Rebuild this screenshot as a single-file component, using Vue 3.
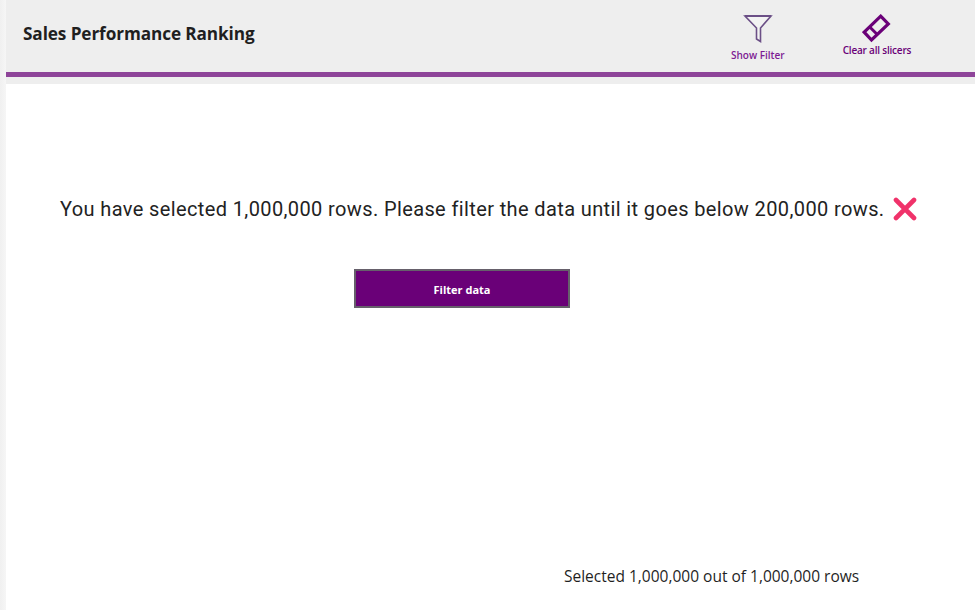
<template>
  <div class="page">
    <div class="main">
      <header class="header">
        <div class="top">
          <h1 class="title">Sales Performance Ranking</h1>
          <div class="actions">
            <div class="action filter">
              <svg class="filter-icon" width="30" height="30" viewBox="0 0 30 30">
                <path d="M2 2H28L17.5 14V27.5L13.5 25V14Z" fill="#fff" fill-opacity="0.25" stroke="#6b4f86" stroke-width="1.6" />
                <path d="M2 2H28" stroke="#6b4f86" stroke-width="2" />
              </svg>
              <span>Show Filter</span>
            </div>
            <div class="action clear">
              <svg class="clear-icon" width="29" height="29" viewBox="0 0 29 29">
                <path d="M18.7 2.2L26.3 10L9.5 26L2.2 18.2Z" fill="none" stroke="#6a0078" stroke-width="3.2" />
                <path d="M7.5 12.8L15.5 20.8" stroke="#6a0078" stroke-width="3" />
              </svg>
              <span>Clear all slicers</span>
            </div>
          </div>
        </div>
        <div class="rule"></div>
        <div class="under"></div>
      </header>

      <section class="body">
        <p class="message">
          You have selected {{ selected }} rows. Please filter the data until it goes below {{ limit }} rows.
          <svg class="cross" width="24" height="24" viewBox="0 0 24 24">
            <path d="M3 3L21 21M21 3L3 21" stroke="#f0326a" stroke-width="4.6" stroke-linecap="round" />
          </svg>
        </p>
        <button class="filter-btn">Filter data</button>
        <p class="count">Selected {{ selected }} out of {{ total }} rows</p>
      </section>
    </div>
  </div>
</template>

<script setup>
const selected = '1,000,000'
const total = '1,000,000'
const limit = '200,000'
</script>

<style>
html, body {
  margin: 0;
  background: #fff;
  overflow: hidden;
}
</style>

<style scoped>
.page {
  width: 977px;
  height: 610px;
  display: flex;
  font-family: "Open Sans", "Noto Sans", sans-serif;
  padding: 0 2px 0 6px;
  box-sizing: border-box;
  background: linear-gradient(to right, #f0f0f0 0, #f6f6f6 6px, #fff 6px);
}

.main {
  flex: 1;
  display: flex;
  flex-direction: column;
  min-width: 0;
}

.top {
  height: 72px;
  background: #eeeeee;
  display: flex;
  align-items: center;
  justify-content: space-between;
  padding-left: 17px;
}

.title {
  margin: 0 0 5px;
  font-size: 17.2px;
  font-weight: 700;
  color: #1f1f1f;
  letter-spacing: -0.1px;
}

.actions {
  display: flex;
  align-items: flex-start;
  gap: 58px;
  width: 244px;
  height: 72px;
}

.action {
  display: flex;
  flex-direction: column;
  align-items: center;
  font-size: 10px;
  font-weight: 600;
  color: #7d1b93;
  white-space: nowrap;
}

.filter {
  padding-top: 14px;
}

.clear {
  padding-top: 14px;
  color: #6a0078;
  letter-spacing: -0.2px;
}

.filter-icon {
  margin-bottom: 4px;
}

.clear-icon {
  margin-bottom: 0;
}

.rule {
  height: 5px;
  background: #8e4499;
}

.under {
  height: 7px;
  background: #eeeeee;
}

.body {
  flex: 1;
  display: flex;
  flex-direction: column;
  min-height: 0;
}

.message {
  margin: 109px 0 0;
  font-family: "Roboto", "Open Sans", sans-serif;
  font-size: 20px;
  letter-spacing: 0.38px;
  color: #222;
  line-height: 32px;
  padding-left: 54px;
  white-space: nowrap;
  display: flex;
  align-items: center;
  gap: 8px;
}

.filter-btn {
  margin: 44px 0 0 348px;
  width: 216px;
  height: 39px;
  border: 2px solid #66606b;
  background: #6a0078;
  color: #fff;
  font-family: inherit;
  font-size: 11px;
  font-weight: 700;
  padding: 1px 0 0;
}

.count {
  margin: 258px 0 0 558px;
  font-size: 15.5px;
  font-weight: 500;
  color: #1f1f1f;
  line-height: 20px;
  white-space: nowrap;
}
</style>
